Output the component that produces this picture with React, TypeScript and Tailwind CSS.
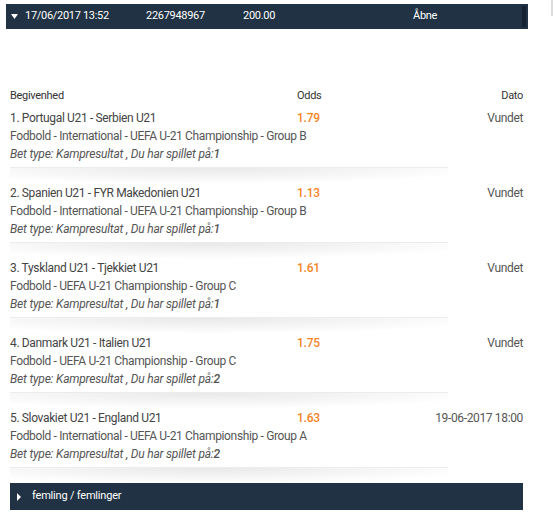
import React from 'react';

type Bet = {
  title: string;
  odds: string;
  info: string;
  pick: string;
  result: string;
};

const BETS: Bet[] = [
  {
    title: '1. Portugal U21 - Serbien U21',
    odds: '1.79',
    info: 'Fodbold - International - UEFA U-21 Championship - Group B',
    pick: '1',
    result: 'Vundet',
  },
  {
    title: '2. Spanien U21 - FYR Makedonien U21',
    odds: '1.13',
    info: 'Fodbold - International - UEFA U-21 Championship - Group B',
    pick: '1',
    result: 'Vundet',
  },
  {
    title: '3. Tyskland U21 - Tjekkiet U21',
    odds: '1.61',
    info: 'Fodbold - UEFA U-21 Championship - Group C',
    pick: '1',
    result: 'Vundet',
  },
  {
    title: '4. Danmark U21 - Italien U21',
    odds: '1.75',
    info: 'Fodbold - UEFA U-21 Championship - Group C',
    pick: '2',
    result: 'Vundet',
  },
  {
    title: '5. Slovakiet U21 - England U21',
    odds: '1.63',
    info: 'Fodbold - International - UEFA U-21 Championship - Group A',
    pick: '2',
    result: '19-06-2017 18:00',
  },
];

function Separator() {
  return (
    <div className="w-[438px]">
      <div className="h-px bg-[#ececec]" />
      <div className="h-[16px] bg-[radial-gradient(ellipse_65%_100%_at_45%_0%,rgba(0,0,0,0.09),rgba(0,0,0,0)_100%)]" />
    </div>
  );
}

function BetRow({ bet }: { bet: Bet }) {
  return (
    <div>
      <div className="flex h-[18px] items-center text-[12px] tracking-[-0.35px] text-[#444]">
        <span className="w-[287px]">{bet.title}</span>
        <span className="font-medium tracking-[-0.2px] text-[#f5851f]">{bet.odds}</span>
        <span className="ml-auto text-[#555]">{bet.result}</span>
      </div>
      <div className="flex h-[18px] items-center text-[12px] tracking-[-0.35px] text-[#555]">{bet.info}</div>
      <div className="flex h-[18px] items-center text-[12px] italic tracking-[-0.2px] text-[#555]">
        Bet type: Kampresultat , Du har spillet på:<span className="font-medium">{bet.pick}</span>
      </div>
      <div className="mt-[4px]">
        <Separator />
      </div>
    </div>
  );
}

export default function App() {
  return (
    <div className="relative min-h-[525px] w-[553px] bg-white pl-[6px] pt-[4px] font-['Roboto',sans-serif]">
      <div className="absolute right-0 top-0 h-[16px] w-[2px] bg-[#dcdcdc]" />

      {/* Coupon header */}
      <div className="flex h-[25px] w-[522px] items-center bg-[#203244] pl-[5px] text-[11px] tracking-[-0.3px] text-white">
        <svg width="7" height="5" viewBox="0 0 7 5" className="mr-[7px]">
          <path d="M0 0 H7 L3.5 5 Z" fill="#fff" />
        </svg>
        <span className="w-[121px]">17/06/2017 13:52</span>
        <span className="w-[97px]">2267948967</span>
        <span className="w-[170px]">200.00</span>
        <span>Åbne</span>
        <div className="ml-auto mr-[2px] h-[21px] w-[4px] bg-[#142231]" />
      </div>

      <div className="ml-[4px] mt-[58px] w-[513px]">
        <div className="flex h-[18px] items-center text-[11px] tracking-[-0.3px] text-[#333]">
          <span className="w-[287px]">Begivenhed</span>
          <span>Odds</span>
          <span className="ml-auto">Dato</span>
        </div>
        <div className="mt-[4px]">
          {BETS.map((bet) => (
            <BetRow key={bet.title} bet={bet} />
          ))}
        </div>

        <div className="-mt-px flex h-[27px] items-center bg-[#203244] pl-[7px] text-[11px] tracking-[-0.2px] text-white">
          <svg width="4" height="8" viewBox="0 0 4 8" className="mr-[11px]">
            <path d="M0 0 L4 4 L0 8 Z" fill="#fff" />
          </svg>
          <span>femling / femlinger</span>
        </div>
      </div>
    </div>
  );
}
